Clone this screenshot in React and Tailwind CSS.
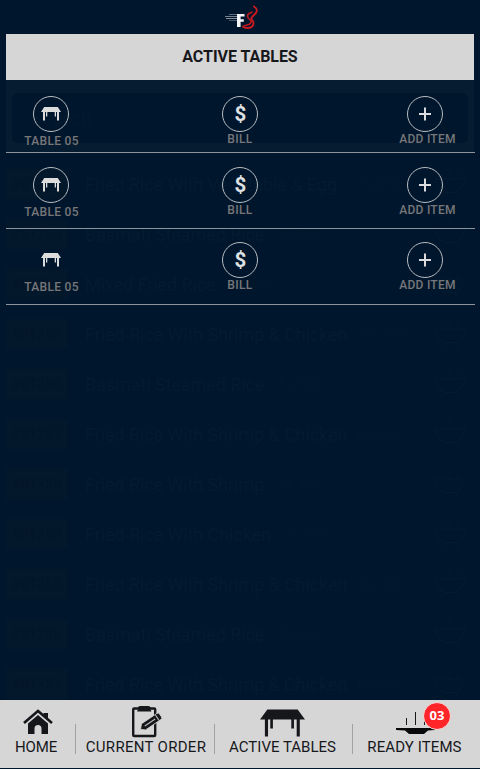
import React from "react";

const dishes = [
  { code: "#01252", name: "Fried Rice With Vegetable & Egg", price: "Rs.400/-", gap: "ml-[21px]" },
  { code: "#01253", name: "Basmati Steamed Rice", price: "Rs.450/-", gap: "ml-[14px]" },
  { code: "#01254", name: "Mixed Fried Rice", price: "Rs.260/-", gap: "ml-[14px]" },
  { code: "#01255", name: "Fried Rice With Shrimp & Chicken", price: "Rs.550/-", gap: "ml-[13px]" },
  { code: "#01256", name: "Basmati Steamed Rice", price: "Rs.320/-", gap: "ml-[14px]" },
  { code: "#01257", name: "Fried Rice With Shrimp & Chicken", price: "Rs.400/-", gap: "ml-[10px]" },
  { code: "#01258", name: "Fried Rice With Shrimp", price: "Rs.300/-", gap: "ml-[14px]" },
  { code: "#01259", name: "Fried Rice With Chicken", price: "Rs.360/-", gap: "ml-[15px]" },
  { code: "#01255", name: "Fried Rice With Shrimp & Chicken", price: "Rs.550/-", gap: "ml-[13px]" },
  { code: "#01256", name: "Basmati Steamed Rice", price: "Rs.320/-", gap: "ml-[14px]" },
  { code: "#01257", name: "Fried Rice With Shrimp & Chicken", price: "Rs.400/-", gap: "ml-[10px]" },
];

function Logo() {
  return (
    <svg width="36" height="26" viewBox="0 0 36 26" className="block">
      <g strokeWidth="1">
        <path d="M5 10.500H14" stroke="#5d6a79" />
        <path d="M1 12.500H14" stroke="#75818e" />
        <path d="M2 14.500H14" stroke="#85909b" />
        <path d="M5 16.500H14" stroke="#45556a" />
      </g>
      <path d="M13 10H20.500V12.600H16.600V15.200H19.800V17.800H16.600V23H13Z" fill="#f4f5f6" />
      <path d="M30 2.500C34 5 33.500 8 30.500 10.500C27.500 13 26.500 14.500 28.500 16.500C31 20 28.500 24 24 24C21.500 24 19.500 23.300 19 22.300" fill="none" stroke="#cf1a20" strokeWidth="1.800" strokeLinecap="round" />
      <path d="M28.500 8C23 9.500 22 12.500 25.500 15C28.500 18 27.500 20.500 20 21.800" fill="none" stroke="#c2181f" strokeWidth="1.500" />
    </svg>
  );
}

function Bowl() {
  return (
    <svg width="32" height="30" viewBox="0 0 32 30" className="ml-auto mr-[14px]" fill="none" stroke="#051b30" strokeWidth="1.200">
      <path d="M1 10H31C30 18 25 23 20 23.500H12C7 23 2 18 1 10ZM10.500 24L7 29M21 24L24.500 29M8.500 8V4M16 8V1M24 8V4" />
    </svg>
  );
}

function Backdrop() {
  return (
    <div className="absolute inset-x-0 top-[80px] bottom-[69px] overflow-hidden" aria-hidden="true">
      <div className="mx-[6px] h-[72px] bg-[#061c30] px-[6px] pt-[13px]">
        <div className="flex h-[50px] items-center rounded-md bg-[#00162c] pl-[18px] pr-5 text-[20px] text-[#03192e]">
          Search
          <svg width="28" height="28" viewBox="0 0 28 28" className="ml-auto" fill="none" stroke="#03192e" strokeWidth="2">
            <circle cx="12" cy="12" r="9" />
            <path d="M19 19L27 27" />
          </svg>
        </div>
      </div>
      <div className="mt-[7px]">
        {dishes.map((d, i) => (
          <div key={i} className="flex h-[50px] items-center pl-[6px]">
            <div className="flex h-[30px] w-[61px] items-center justify-center bg-[#04182c] text-[14px] tracking-[0.3px] text-[#021629]">
              {d.code}
            </div>
            <div className="ml-[18px] whitespace-nowrap text-[18px] tracking-[-0.08px] text-[#041b30]">{d.name}</div>
            <div className={"whitespace-nowrap text-[13px] tracking-[0.4px] text-[#01182d] " + d.gap}>{d.price}</div>
            <Bowl />
          </div>
        ))}
      </div>
    </div>
  );
}

function SmallTable() {
  return (
    <svg width="20" height="14" viewBox="0 0 20 14" fill="#dcdcdc">
      <path d="M3.200 0H16.800L20 5H0Z" />
      <path d="M2 4.500H4V13.500H2ZM16 4.500H18V13.500H16ZM5 4.500H6.300V9.500H5ZM13.700 4.500H15V9.500H13.700Z" />
    </svg>
  );
}

function Action({ label, ring = true, labelTop = "mt-0", children }) {
  return (
    <div className="flex w-[70px] flex-col items-center">
      <div className={"flex size-9 items-center justify-center rounded-full " + (ring ? "border border-[#b7bcc1]" : "")}>
        {children}
      </div>
      <div className={"whitespace-nowrap text-[12px] leading-[14px] font-medium text-[#777779] " + labelTop}>{label}</div>
    </div>
  );
}

function TableRow({ size, ring }) {
  return (
    <div className={"flex border-b border-[#8d949b] pl-[10px] pr-[10px] " + size}>
      <Action label={<span className="pl-px tracking-[0.3px]">TABLE 05</span>} ring={ring} labelTop="mt-[2px]">
        <SmallTable />
      </Action>
      <div className="ml-[119px]">
        <Action label={<span className="tracking-[0.4px]">BILL</span>}>
          <span className="pl-px text-[20.5px] leading-[34px] font-bold text-[#dfe0e2]">$</span>
        </Action>
      </div>
      <div className="ml-auto flex w-[75px] flex-col items-center">
        <div className="mr-[5px] flex size-9 items-center justify-center rounded-full border border-[#b7bcc1]">
          <svg width="14" height="14" viewBox="0 0 14 14">
            <path d="M7 .5V13.500M1 7H13" stroke="#dcdcde" strokeWidth="2" />
          </svg>
        </div>
        <div className="whitespace-nowrap text-[12px] leading-[14px] font-medium tracking-[0.25px] text-[#777779]">ADD ITEM</div>
      </div>
    </div>
  );
}

function HomeIcon() {
  return (
    <svg width="30" height="26" viewBox="0 0 30 26" className="ml-px">
      <path d="M1 14L15 2L29 14" fill="none" stroke="#16171b" strokeWidth="2.600" />
      <path d="M20.500 4H25V11L20.500 7Z" fill="#16171b" />
      <path d="M5 14.500L15 6L25 14.500V25H18.500V19.500A3.500 3.500 0 0 0 11.500 19.500V25H5Z" fill="#16171b" />
    </svg>
  );
}

function OrderIcon() {
  return (
    <svg width="30" height="32" viewBox="0 0 30 32" className="ml-[4px] shrink-0">
      <rect x="1.200" y="2.500" width="22" height="27.500" rx="1" fill="none" stroke="#16171b" strokeWidth="2.400" />
      <path d="M6 2Q6 0 8 0H16.500Q18.500 0 18.500 2V3.500L19.500 5.500H5L6 3.500Z" fill="#16171b" />
      <g transform="translate(8.500 23.500) rotate(-34)">
        <path d="M0 0L4 -4.200H22.500Q24.500 -4.200 24.500 -2V1Q24.500 3.200 22.500 3.200H4Z" fill="#16171b" stroke="#d6d6d6" strokeWidth=".8" />
        <path d="M5.500 -.5H18M20.500 -3.500V2.500" stroke="#bdbdbd" strokeWidth="1" />
      </g>
    </svg>
  );
}

function BigTable() {
  return (
    <svg width="45" height="28" viewBox="0 0 46 28" preserveAspectRatio="none" fill="#16171b" className="-ml-[2px] translate-y-px">
      <path d="M7.500 .5H38.500L46 10.500H0Z" />
      <path d="M5 10H8.200V27.500H5ZM37.500 10H40.700V27.500H37.500ZM10.500 10H13.200V19.500H10.500ZM32 10H34.700V19.500H32Z" />
    </svg>
  );
}

function ReadyIcon() {
  return (
    <div className="relative">
      <svg width="40" height="24" viewBox="0 0 40 24" className="block translate-y-[2px]">
        <path d="M11.500 6V13M20.500 0V13M29.500 5V13" stroke="#16171b" strokeWidth="1" />
        <path d="M1 16H40V18L33 18.500L29 22H14L10 18.500L1 18Z" fill="#08090b" />
      </svg>
      <div className="absolute -top-[8px] left-[28px] flex size-[28px] items-center justify-center rounded-full border border-[#f3dcdc] bg-[#ff2529] font-['Open_Sans',sans-serif] text-[13px] font-bold text-white">
        03
      </div>
    </div>
  );
}

function NavItem({ width, label, tracking, children }) {
  return (
    <div className={"flex flex-col items-center pt-[6px] " + width}>
      <div className="flex h-8 items-center justify-center">{children}</div>
      <div className={"whitespace-nowrap text-[15px] leading-[18px] text-[#17181c] " + tracking}>{label}</div>
    </div>
  );
}

const Divider = () => <div className="mt-6 h-[30px] w-px bg-[#a2a2a3]" />;

export default function App() {
  return (
    <div className="relative flex h-[769px] w-[480px] flex-col overflow-hidden bg-[#00162c] font-[Roboto,sans-serif]">
      <Backdrop />
      <div className="relative flex h-[34px] shrink-0 justify-center pt-[4px]">
        <div className="ml-[3px]"><Logo /></div>
      </div>
      <div className="relative mx-[6px] flex h-[46px] shrink-0 items-center justify-center bg-[#d6d6d6] text-[16px] font-bold tracking-[-0.05px] text-[#17181c]">
        ACTIVE TABLES
      </div>
      <div className="relative ml-[6px] mr-[5px] flex flex-1 flex-col">
        <TableRow size="h-[73px] pt-[16px]" />
        <TableRow size="h-[76px] pt-[14px]" />
        <TableRow size="h-[76px] pt-[13px]" ring={false} />
      </div>
      <div className="relative mb-px flex h-[68px] shrink-0 bg-[#d6d6d6]">
        <NavItem width="w-[75px]" label="HOME" tracking="tracking-[-0.1px] -ml-[3px]"><HomeIcon /></NavItem>
        <Divider />
        <NavItem width="w-[138px]" label="CURRENT ORDER" tracking="tracking-[0.3px] ml-[2px]"><OrderIcon /></NavItem>
        <Divider />
        <NavItem width="w-[137px]" label="ACTIVE TABLES" tracking="tracking-[0px] -ml-[2px]"><BigTable /></NavItem>
        <Divider />
        <NavItem width="w-[124px]" label="READY ITEMS" tracking="tracking-[0.1px] -ml-px"><ReadyIcon /></NavItem>
      </div>
    </div>
  );
}
